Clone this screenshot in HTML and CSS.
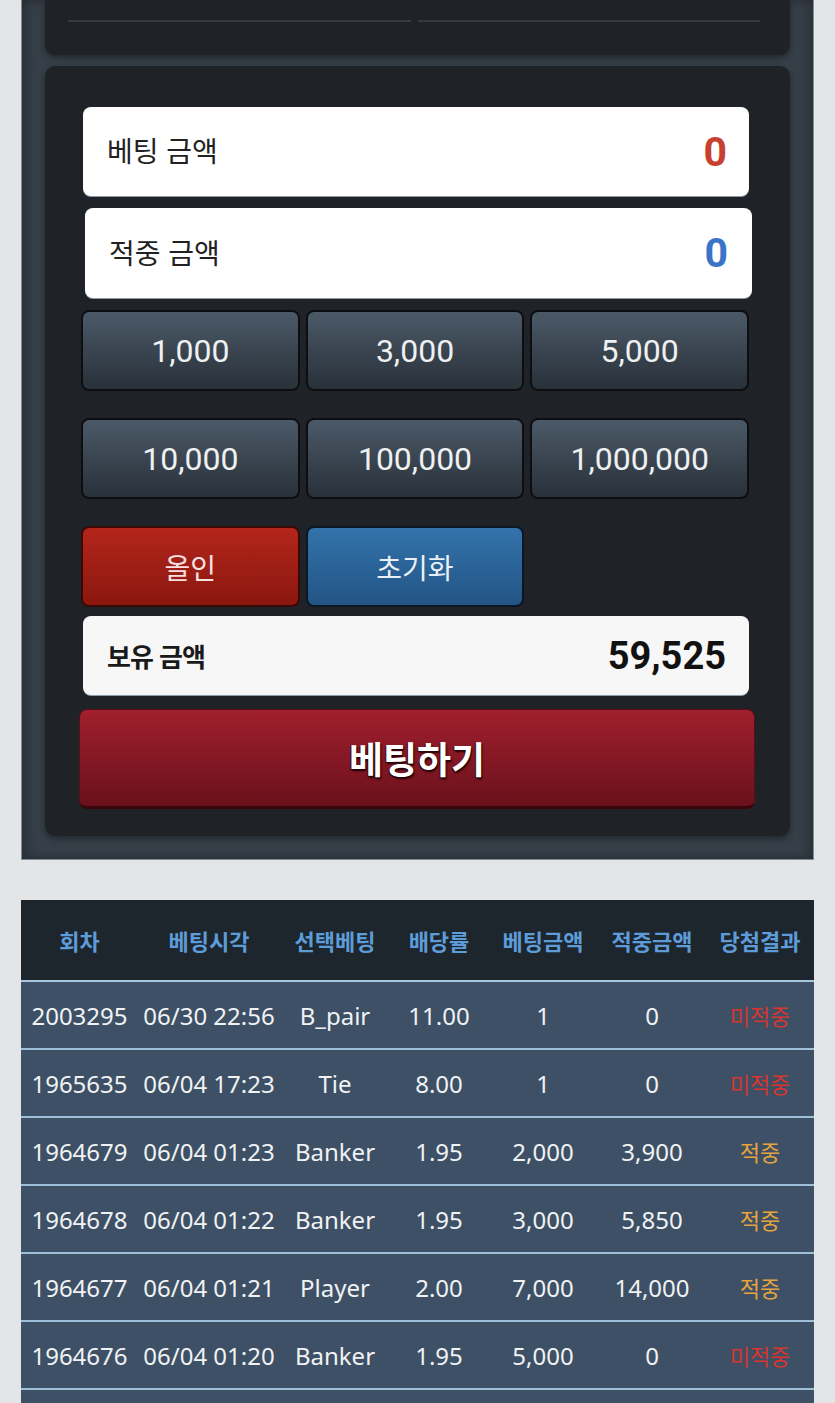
FILE: index.html
```html
<!DOCTYPE html>
<html lang="ko">

<head>
    <meta charset="UTF-8">
    <meta name="viewport" content="width=device-width, initial-scale=1.0">
    <title>베팅</title>
    <link rel="stylesheet" href="styles.css">
</head>

<body>
    <div class="panel">
        <div class="card card-top">
            <div class="field-row">
                <div class="field"></div>
                <div class="field"></div>
            </div>
        </div>

        <div class="card card-bet">
            <div class="amount-box bet-box">
                <span class="amount-label">베팅 금액</span>
                <span class="amount-value red">0</span>
            </div>
            <div class="amount-box win-box">
                <span class="amount-label">적중 금액</span>
                <span class="amount-value blue">0</span>
            </div>

            <div class="chip-grid">
                <button class="chip">1,000</button>
                <button class="chip">3,000</button>
                <button class="chip">5,000</button>
                <button class="chip">10,000</button>
                <button class="chip">100,000</button>
                <button class="chip">1,000,000</button>
            </div>

            <div class="action-row">
                <button class="action allin">올인</button>
                <button class="action reset">초기화</button>
            </div>

            <div class="amount-box hold-box">
                <span class="hold-label">보유 금액</span>
                <span class="hold-value">59,525</span>
            </div>

            <button class="bet-button">베팅하기</button>
        </div>
    </div>

    <table class="history">
        <colgroup>
            <col style="width:117px">
            <col style="width:142px">
            <col style="width:110px">
            <col style="width:98px">
            <col style="width:110px">
            <col style="width:108px">
            <col style="width:108px">
        </colgroup>
        <thead>
            <tr>
                <th>회차</th>
                <th>베팅시각</th>
                <th>선택베팅</th>
                <th>배당률</th>
                <th>베팅금액</th>
                <th>적중금액</th>
                <th>당첨결과</th>
            </tr>
        </thead>
        <tbody>
            <tr>
                <td>2003295</td>
                <td>06/30 22:56</td>
                <td>B_pair</td>
                <td>11.00</td>
                <td>1</td>
                <td>0</td>
                <td class="result lose">미적중</td>
            </tr>
            <tr>
                <td>1965635</td>
                <td>06/04 17:23</td>
                <td>Tie</td>
                <td>8.00</td>
                <td>1</td>
                <td>0</td>
                <td class="result lose">미적중</td>
            </tr>
            <tr>
                <td>1964679</td>
                <td>06/04 01:23</td>
                <td>Banker</td>
                <td>1.95</td>
                <td>2,000</td>
                <td>3,900</td>
                <td class="result win">적중</td>
            </tr>
            <tr>
                <td>1964678</td>
                <td>06/04 01:22</td>
                <td>Banker</td>
                <td>1.95</td>
                <td>3,000</td>
                <td>5,850</td>
                <td class="result win">적중</td>
            </tr>
            <tr>
                <td>1964677</td>
                <td>06/04 01:21</td>
                <td>Player</td>
                <td>2.00</td>
                <td>7,000</td>
                <td>14,000</td>
                <td class="result win">적중</td>
            </tr>
            <tr>
                <td>1964676</td>
                <td>06/04 01:20</td>
                <td>Banker</td>
                <td>1.95</td>
                <td>5,000</td>
                <td>0</td>
                <td class="result lose">미적중</td>
            </tr>
            <tr class="empty-row">
                <td></td>
                <td></td>
                <td></td>
                <td></td>
                <td></td>
                <td></td>
                <td></td>
            </tr>
        </tbody>
    </table>
</body>

</html>
```

FILE: styles.css
```css
/* Reset styles */
* {
    margin: 0;
    padding: 0;
    box-sizing: border-box;
}

body {
    font-family: Roboto, "Noto Sans CJK KR", sans-serif;
    background: #e4e5e6;
    padding: 0 21px 40px;
}

/* Outer dark panel */
.panel {
    background: #363e47;
    border: 1px solid #7d8a98;
    border-top: none;
    padding: 0 23px 23px;
    box-shadow: inset 6px 0 10px rgba(0, 0, 0, 0.18), inset -6px 0 10px rgba(0, 0, 0, 0.18);
}

.card {
    background: #1f2328;
    border-radius: 10px;
    box-shadow: 0 3px 6px rgba(0, 0, 0, 0.35);
}

.card-top {
    border-radius: 0 0 10px 10px;
    padding: 0 30px 33px 23px;
}

.field-row {
    display: flex;
    gap: 7px;
}

.field {
    flex: 1;
    height: 22px;
    border-bottom: 2px solid #363b41;
}

.card-bet {
    margin-top: 11px;
    padding: 41px 41px 27px 36px;
}

/* Amount boxes */
.amount-box {
    display: flex;
    align-items: center;
    justify-content: space-between;
    background: #ffffff;
    border-radius: 8px;
    padding: 0 22px 0 24px;
    box-shadow: 0 1px 0 #8e9aa8;
}

.bet-box {
    height: 89px;
    margin-left: 2px;
}

.win-box {
    height: 90px;
    margin: 12px -3px 0 4px;
    padding-right: 24px;
}

.amount-label {
    font-family: "Noto Sans CJK KR", sans-serif;
    font-size: 28px;
    color: #222222;
    margin-top: -3px;
}

.amount-value {
    font-family: Roboto, sans-serif;
    font-size: 41px;
    font-weight: bold;
}

.red {
    color: #c8402f;
}

.blue {
    color: #3a74c9;
}

/* Chip buttons */
.chip-grid,
.action-row {
    display: grid;
    grid-template-columns: repeat(3, 1fr);
    column-gap: 6px;
}

.chip-grid {
    margin-top: 12px;
    row-gap: 27px;
}

.chip,
.action {
    height: 81px;
    border-radius: 8px;
    border: 2px solid #0c0e11;
    cursor: pointer;
}

.chip {
    background: linear-gradient(#4b5967, #29313a);
    color: #eef0f2;
    font-family: Roboto, sans-serif;
    font-size: 32px;
}

.action-row {
    margin-top: 27px;
}

.action {
    font-family: "Noto Sans CJK KR", sans-serif;
    font-size: 28px;
}

.allin {
    background: linear-gradient(#b3251b, #8a170f);
    border-color: #3a0905;
    color: #f6e0e0;
}

.reset {
    background: linear-gradient(#3373ab, #235484);
    border-color: #0a1725;
    color: #e9f0f7;
}

/* Holdings */
.hold-box {
    height: 79px;
    margin: 9px 0 0 2px;
    background: #f7f7f7;
    padding: 0 23px 0 24px;
}

.hold-label {
    font-family: "Noto Sans CJK KR", sans-serif;
    font-size: 26px;
    font-weight: bold;
    color: #1a1a1a;
    letter-spacing: -1px;
}

.hold-value {
    font-family: Roboto, sans-serif;
    font-size: 38px;
    font-weight: bold;
    color: #111111;
}

/* Bet button */
.bet-button {
    display: block;
    width: calc(100% + 8px);
    height: 100px;
    margin: 14px -6px 0 -2px;
    background: linear-gradient(#a11f2e, #6a111b);
    border: 1px solid #5c0e17;
    border-bottom: 3px solid #3a060c;
    border-radius: 8px;
    color: #ffffff;
    font-family: "Noto Sans CJK KR", sans-serif;
    font-size: 37px;
    font-weight: bold;
    text-shadow: -1px 1px 0 #2a0408, 1px 2px 2px #1a0205;
    cursor: pointer;
}

/* History table */
.history {
    width: 100%;
    margin-top: 40px;
    border-collapse: separate;
    border-spacing: 0;
    table-layout: fixed;
    font-family: "Noto Sans", "Noto Sans CJK KR", sans-serif;
}

.history th {
    height: 82px;
    background: #1d252d;
    color: #5d9cd8;
    font-family: "Noto Sans CJK KR", sans-serif;
    font-size: 22px;
    font-weight: bold;
    border-bottom: 2px solid #a8c6de;
    white-space: nowrap;
}

.history td {
    height: 68px;
    background: #3d5065;
    color: #f0f2f4;
    font-size: 24px;
    text-align: center;
    border-bottom: 2px solid #9dbfd9;
    white-space: nowrap;
}

.history td.result {
    font-family: "Noto Sans CJK KR", sans-serif;
    font-size: 22px;
}

.lose {
    color: #d9352f !important;
}

.win {
    color: #e6a43e !important;
}
```
